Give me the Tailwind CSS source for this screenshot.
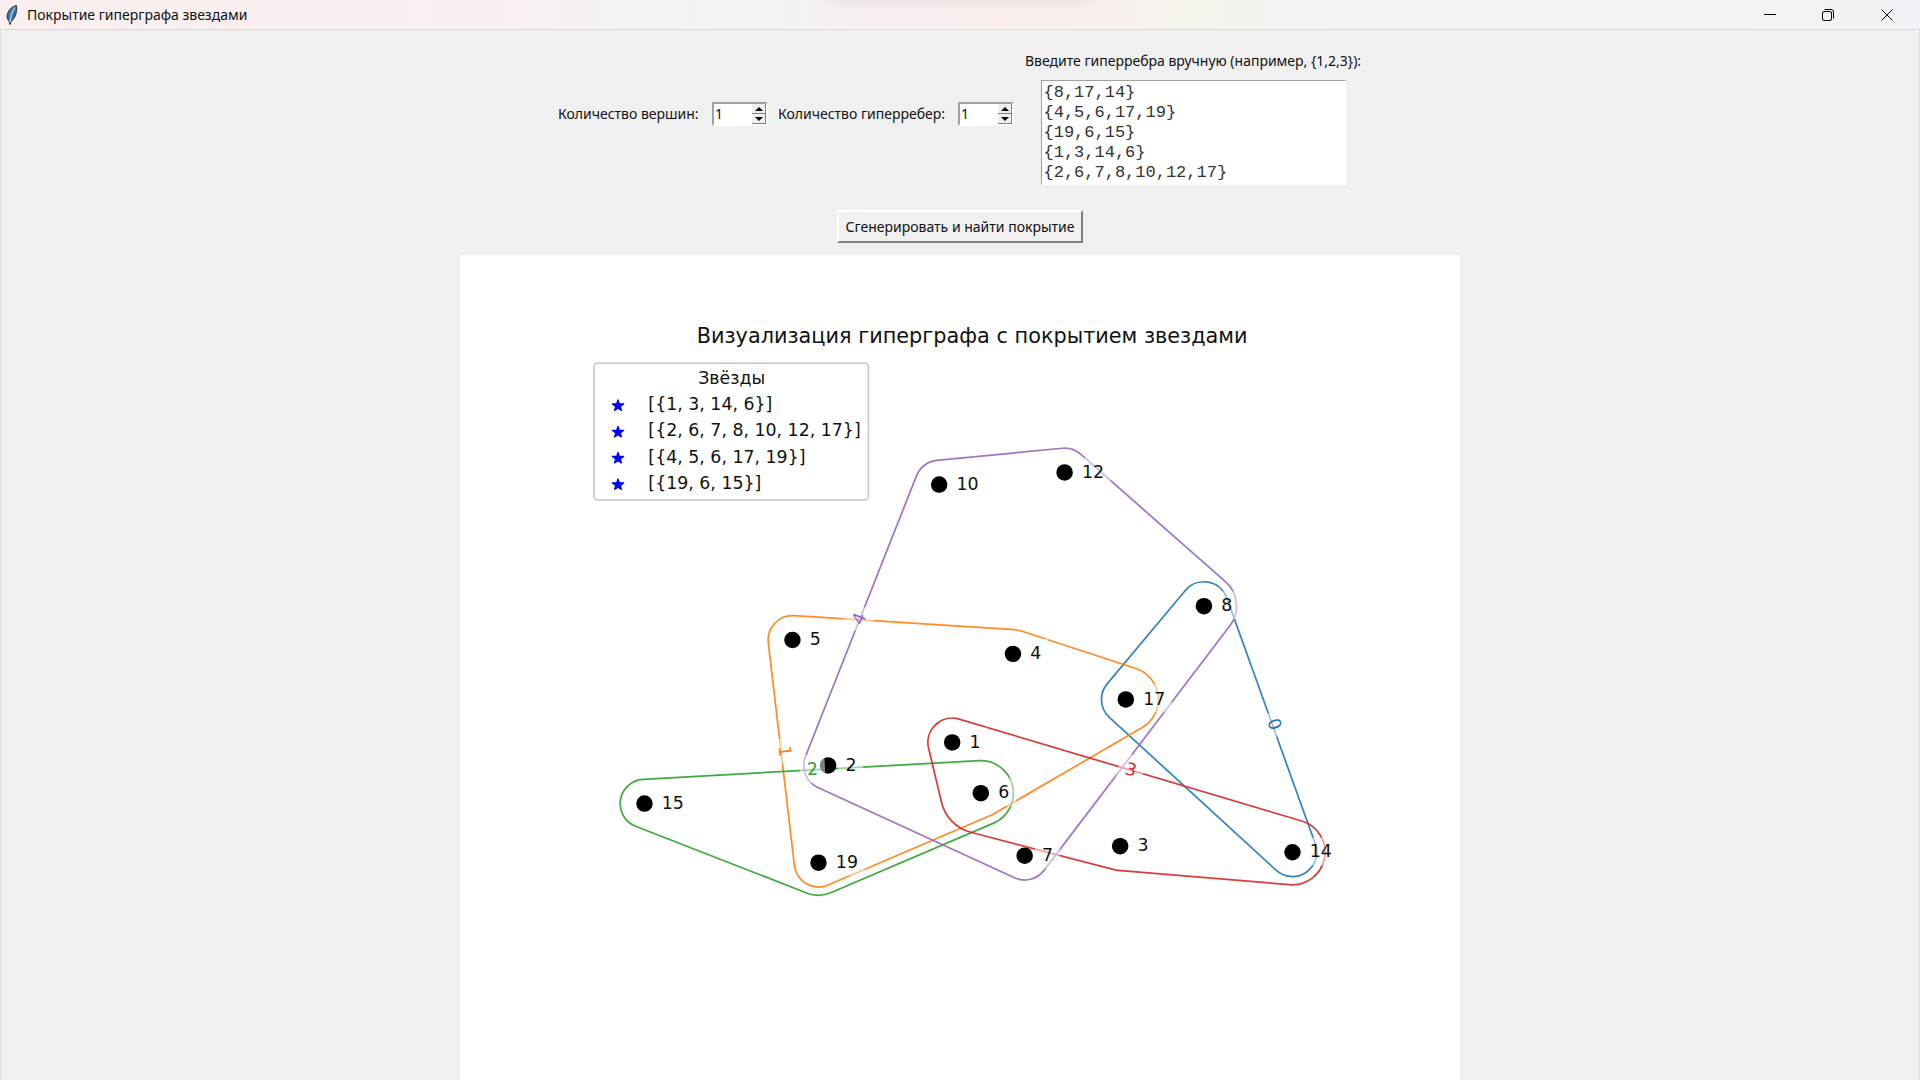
<!DOCTYPE html>
<html lang="ru">
<head>
<meta charset="utf-8">
<title>Покрытие гиперграфа звездами</title>
<script src="https://cdn.jsdelivr.net/npm/@tailwindcss/browser@4"></script>
</head>
<body class="flex h-screen flex-col overflow-hidden bg-[#f0f0f0] font-['Noto_Sans','Open_Sans',sans-serif] text-sm text-[#111]">

<header class="relative flex h-[30px] shrink-0 items-center overflow-hidden border-b border-[#d8d8d8] bg-[linear-gradient(to_right,#f9efef_20%,#f3f3f1_40%,#f7efef_45%,#f9eeec_52%,#f6f2ec_61%,#f1f3f4_80%,#f1f2f7)]">
  <div class="absolute -top-1 left-1/2 h-1 w-[264px] -translate-x-1/2 rounded-full shadow-[0_0_10px_1px_rgba(0,0,0,0.1)]"></div>
  <svg class="ml-1 h-5 w-4 shrink-0" viewBox="0 0 16 20" aria-hidden="true">
    <path d="M12.500 .5C8 1 3.500 6 3 11c0 2 .8 4 2 5L6 19.500l1-3C11 14 13.500 7 12.500.5Z" fill="#3f6ea3" stroke="#2a3a4c"/>
    <path d="M11 2.500C8.500 5 7 9 6 17" fill="none" stroke="#a9cbe8" stroke-width="1.500"/>
  </svg>
  <h1 class="ml-[7px] grow whitespace-nowrap">Покрытие гиперграфа звездами</h1>
  <button type="button" aria-label="Свернуть" class="flex h-full w-[58px] items-center justify-center">
    <svg class="size-3" viewBox="0 0 12 12" fill="none" stroke="#000"><path d="M0 5.500h12"/></svg>
  </button>
  <button type="button" aria-label="Восстановить" class="flex h-full w-[58px] items-center justify-center">
    <svg class="size-3" viewBox="0 0 12 12" fill="none" stroke="#000"><rect x=".5" y="2.500" width="9" height="9" rx="1.500"/><path d="M2.500.5H9A2.500 2.500 0 0 1 11.500 3v6.500"/></svg>
  </button>
  <button type="button" aria-label="Закрыть" class="mr-[3px] flex h-full w-[60px] items-center justify-center">
    <svg class="size-3" viewBox="0 0 12 12" fill="none" stroke="#000"><path d="M.5.5l11 11M11.500.5l-11 11"/></svg>
  </button>
</header>

<main class="flex grow flex-col items-center border-x border-[#dcdcdc] pt-[21px]">
  <form class="flex flex-col items-center">
    <div class="flex items-center whitespace-nowrap">
      <div class="mb-2 flex items-center">
        <label for="vertices" class="w-[154px]">Количество вершин:</label>
        <div class="flex h-6 w-14 border-2 border-t-[#a0a0a0] border-l-[#a0a0a0] border-r-white border-b-white bg-white">
          <input id="vertices" type="text" value="1" class="w-0 grow pl-px outline-none">
          <div class="flex w-[14px] flex-col">
            <button type="button" aria-label="Больше вершин" class="flex grow items-center justify-center border-r border-b border-[#808080] bg-[#f0f0f0]"><svg class="h-1 w-2" viewBox="0 0 8 4"><path d="M0 4h8L4 0Z"/></svg></button>
            <button type="button" aria-label="Меньше вершин" class="flex grow items-center justify-center border-r border-b border-[#808080] bg-[#f0f0f0]"><svg class="h-1 w-2" viewBox="0 0 8 4"><path d="M0 0h8L4 4Z"/></svg></button>
          </div>
        </div>
        <label for="edges" class="ml-[10px] w-[180px]">Количество гиперребер:</label>
        <div class="flex h-6 w-14 border-2 border-t-[#a0a0a0] border-l-[#a0a0a0] border-r-white border-b-white bg-white">
          <input id="edges" type="text" value="1" class="w-0 grow pl-px outline-none">
          <div class="flex w-[14px] flex-col">
            <button type="button" aria-label="Больше гиперребер" class="flex grow items-center justify-center border-r border-b border-[#808080] bg-[#f0f0f0]"><svg class="h-1 w-2" viewBox="0 0 8 4"><path d="M0 4h8L4 0Z"/></svg></button>
            <button type="button" aria-label="Меньше гиперребер" class="flex grow items-center justify-center border-r border-b border-[#808080] bg-[#f0f0f0]"><svg class="h-1 w-2" viewBox="0 0 8 4"><path d="M0 0h8L4 4Z"/></svg></button>
          </div>
        </div>
      </div>
      <div class="ml-[10px] flex w-[338px] flex-col items-center">
        <label for="manual" class="mb-[9px] leading-5">Введите гиперребра вручную (например, {1,2,3}):</label>
        <textarea id="manual" class="h-[105px] w-[305px] resize-none overflow-hidden border border-t-[#a0a0a0] border-l-[#a0a0a0] border-r-white border-b-white bg-white px-[2px] py-[2px] font-['Liberation_Mono',monospace] text-[17px]/5 text-[#333] outline-none">{8,17,14}
{4,5,6,17,19}
{19,6,15}
{1,3,14,6}
{2,6,7,8,10,12,17}</textarea>
      </div>
    </div>
    <button type="button" class="mt-[25px] h-[33px] w-[246px] whitespace-nowrap border-2 border-t-white border-l-white border-r-[#808080] border-b-[#808080] bg-[#f0f0f0]">Сгенерировать и найти покрытие</button>
  </form>

  <svg class="mt-3 h-auto w-[1000px] max-w-full shrink-0 bg-white font-['DejaVu_Sans',sans-serif] text-[40px]" viewBox="0 0 2304 2304" fill="#111" role="img" aria-label="Визуализация гиперграфа">
    <g id="hulls" fill="none" stroke-width="4" stroke-opacity=".9"></g>
    <g id="dots" fill="#000"></g>
    <g id="plates" fill="#fff" fill-opacity=".5"></g>
    <g id="labels"></g>
    <text x="1180" y="203" text-anchor="middle" class="text-[48px]">Визуализация гиперграфа с покрытием звездами</text>
    <rect x="309" y="249" width="632" height="315" rx="8" fill="#fff" stroke="#ccc" stroke-width="4"/>
    <text x="626" y="297" text-anchor="middle">Звёзды</text>
    <g fill="#00f" stroke="#00f" stroke-width="3" stroke-linejoin="round">
      <path id="star" d="M364 334l3 9h10l-8 6 3 9-8-5-8 5 3-9-8-6h10Z"/>
      <use href="#star" y="61"/><use href="#star" y="121"/><use href="#star" y="182"/>
    </g>
    <text x="434" y="357">[{1, 3, 14, 6}]</text>
    <text x="434" y="418">[{2, 6, 7, 8, 10, 12, 17}]</text>
    <text x="434" y="479">[{4, 5, 6, 17, 19}]</text>
    <text x="434" y="540">[{19, 6, 15}]</text>
  </svg>
</main>

<script>
const nodes = {
  1: [1134, 1123], 2: [848, 1176], 3: [1521, 1362], 4: [1274, 919], 5: [766, 887],
  6: [1200, 1240], 7: [1301, 1384], 8: [1714, 809], 10: [1104, 529], 12: [1393, 501],
  14: [1918, 1376], 15: [425, 1264], 17: [1534, 1024], 19: [826, 1400]
};
// Each hull lists [vertex, radius] clockwise; its label is [x, y, angle].
const edges = [
  {color: '#1f77b4', hull: [[8, 56], [14, 56], [17, 56]], label: [1877, 1081, 70]},
  {color: '#ff7f0e', hull: [[5, 56], [4, 56], [17, 75], [6, 56], [19, 56]], label: [749, 1143, 84]},
  {color: '#2ca02c', hull: [[15, 56], [6, 75], [19, 75]], label: [812, 1184, -3]},
  {color: '#d62728', hull: [[1, 56], [14, 75], [3, 56], [6, 93]], label: [1546, 1185, 16]},
  {color: '#9467bd', hull: [[10, 56], [12, 56], [8, 75], [7, 56], [2, 56]], label: [919, 838, -68]}
];
const add = (parent, tag, attrs, text) => {
  const el = document.createElementNS('http://www.w3.org/2000/svg', tag);
  for (const k in attrs) el.setAttribute(k, attrs[k]);
  if (text !== undefined) el.textContent = text;
  document.getElementById(parent).append(el);
};
edges.forEach((edge, i) => {
  let d = '';
  edge.hull.forEach(([v, r], k) => {
    const [w, s] = edge.hull[(k + 1) % edge.hull.length];
    const [x, y] = nodes[v], [p, q] = nodes[w];
    const len = Math.hypot(p - x, q - y), ux = (p - x) / len, uy = (q - y) / len;
    const a = (r - s) / len, b = Math.sqrt(1 - a * a);
    const nx = a * ux + b * uy, ny = a * uy - b * ux;
    d += (d ? `A${r} ${r} 0 0 1 ` : 'M') + `${x + r * nx} ${y + r * ny}L${p + s * nx} ${q + s * ny}`;
  });
  const r0 = edge.hull[0][1], start = d.slice(1, d.indexOf('L'));
  add('hulls', 'path', {d: d + `A${r0} ${r0} 0 0 1 ${start}`, stroke: edge.color});
  const [x, y, angle] = edge.label, transform = `rotate(${angle} ${x} ${y})`;
  add('plates', 'rect', {x: x - 29, y: y - 33, width: 58, height: 66, transform});
  add('labels', 'text', {x, y: y + 14, 'text-anchor': 'middle', fill: edge.color, transform}, i);
});
for (const v in nodes) {
  const [x, y] = nodes[v];
  add('dots', 'circle', {cx: x, cy: y, r: 19});
  add('plates', 'rect', {x: x + 24, y: y - 34, width: 25 * v.length + 32, height: 64});
  add('labels', 'text', {x: x + 40, y: y + 12}, v);
}
</script>
</body>
</html>
